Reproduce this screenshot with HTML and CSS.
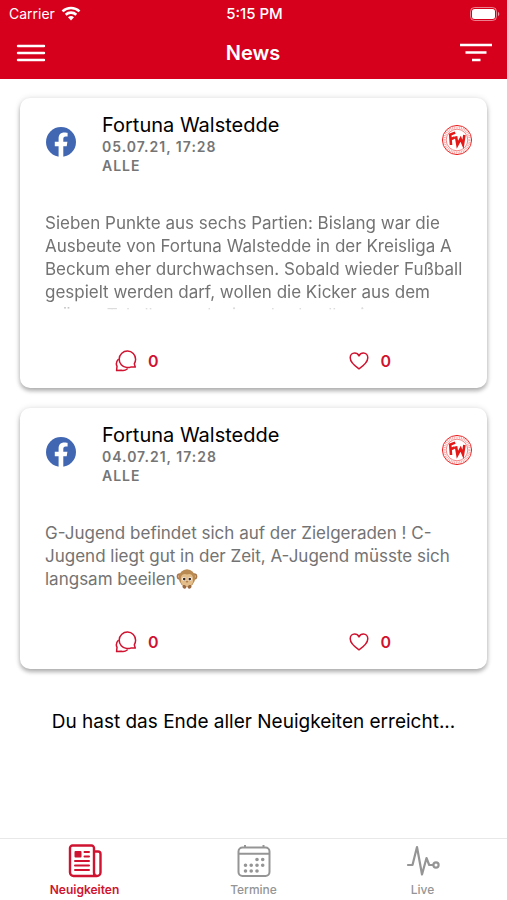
FILE: index.html
```html
<!DOCTYPE html>
<html lang="de">
<head>
<meta charset="UTF-8">
<meta name="viewport" content="width=device-width, initial-scale=1">
<title>News</title>
<link rel="stylesheet" href="styles.css">
</head>
<body>
<!-- shared icons -->
<svg class="sprite" aria-hidden="true">
	<symbol id="facebook" viewBox="0 0 30 30">
		<circle cx="15" cy="15" r="15" fill="#4267b2"/>
		<path d="M12.600 30V19.200H8.800v-4.400h3.800v-3.300c0-3.800 2.200-5.900 5.700-5.900 1.600 0 3.300.3 3.300.3v3.700h-1.900c-1.800 0-2.400 1.100-2.400 2.300v2.900h4.100l-.7 4.400h-3.400V30z" fill="#fff"/>
	</symbol>
	<symbol id="club" viewBox="0 0 32 32">
		<g fill="none" stroke="#ec2525">
			<circle cx="16" cy="16" r="14.600" stroke-width="1"/>
			<circle cx="16" cy="16" r="12.600" stroke-width="2.200" stroke-dasharray="1 .8" opacity=".4"/>
			<circle cx="16" cy="16" r="10.800" stroke-width=".8" opacity=".7"/>
			<path d="M10 21L9.200 10.600l5-2M9.800 15.200l4-1.800M15 12.200l1.400 8.600 3.200-6 2.400 5.600 1.400-9.400" stroke-width="2.600" stroke="#e51717"/>
		</g>
	</symbol>
	<symbol id="comment" viewBox="0 0 22 22">
		<g fill="none" stroke="currentColor" stroke-width="1.500" stroke-linejoin="round" stroke-linecap="round">
			<path d="M20.300 17.100h-4.600c-1.200.4-2.600.6-3.900.4A8.200 8.200 0 1 1 20.600 9.300c0 1.700-.5 3.200-1.300 4.500z"/>
			<path d="M3.200 9.600C1.200 11.700 1 14.200 2 16.200L1.600 20.600l4.600-.4c2.200.5 4.400.1 6-1.200"/>
		</g>
	</symbol>
	<symbol id="heart" viewBox="0 0 20 20">
		<path d="M10 17.800C5.500 14.700 1.200 11.200 1.200 6.700 1.200 3.900 3.200 2 5.600 2 7.500 2 9.100 3 10 4.900 10.900 3 12.500 2 14.400 2c2.400 0 4.400 1.900 4.400 4.700 0 4.500-4.300 8-8.800 11.100z" fill="none" stroke="currentColor" stroke-width="1.500" stroke-linejoin="round"/>
	</symbol>
</svg>
<div class="page">
	<header class="header">
		<div class="status">
			<span class="carrier">Carrier
				<svg width="20" height="15" viewBox="0 0 20 15" fill="none" stroke="#fff" stroke-width="2.600">
					<path d="M1.500 5.400a12.500 12.500 0 0 1 17 0M4.700 8.700a7.800 7.800 0 0 1 10.600 0"/>
					<path d="M7 11.300a4.400 4.400 0 0 1 6 0L10 14.400z" fill="#fff" stroke="none"/>
				</svg>
			</span>
			<span class="time">5:15 PM</span>
			<svg class="battery" width="30" height="14" viewBox="0 0 30 14">
				<rect x=".5" y=".5" width="26" height="13" rx="4" fill="none" stroke="#fff" opacity=".5"/>
				<rect x="2" y="2" width="23" height="10" rx="2.500" fill="#fff"/>
				<path d="M28 4.800c1.800.8 1.800 3.600 0 4.400z" fill="#fff" opacity=".6"/>
			</svg>
		</div>
		<div class="bar">
			<button class="bar-btn" type="button" aria-label="Menü">
				<svg width="30" height="20" viewBox="0 0 30 20" stroke="#fff" stroke-width="2.400" stroke-linecap="round"><path d="M2 3h26M2 10h26M2 17h26"/></svg>
			</button>
			<h1 class="title">News</h1>
			<button class="bar-btn" type="button" aria-label="Filter">
				<svg width="32" height="20" viewBox="0 0 32 20" stroke="#fff" stroke-width="2.400"><path d="M0 2h32M5.500 9.500h21M12 17h8.500"/></svg>
			</button>
		</div>
	</header>
	<main class="feed">
		<article class="card">
			<div class="card-head">
				<svg class="source" width="30" height="30"><use href="#facebook"/></svg>
				<div class="meta">
					<h2 class="name">Fortuna Walstedde</h2>
					<p class="sub">05.07.21, 17:28</p>
					<p class="sub">ALLE</p>
				</div>
				<svg class="club" width="32" height="32"><use href="#club"/></svg>
			</div>
			<p class="text long">Sieben Punkte aus sechs Partien: Bislang war die Ausbeute von Fortuna Walstedde in der Kreisliga A Beckum eher durchwachsen. Sobald wieder Fußball gespielt werden darf, wollen die Kicker aus dem grünen Tal allen noch einmal schnell zeigen</p>
			<div class="actions">
				<button class="action" type="button" aria-label="Kommentare"><svg width="22" height="22"><use href="#comment"/></svg>0</button>
				<button class="action" type="button" aria-label="Gefällt mir"><svg width="20" height="20"><use href="#heart"/></svg>0</button>
			</div>
		</article>
		<article class="card">
			<div class="card-head">
				<svg class="source" width="30" height="30"><use href="#facebook"/></svg>
				<div class="meta">
					<h2 class="name">Fortuna Walstedde</h2>
					<p class="sub">04.07.21, 17:28</p>
					<p class="sub">ALLE</p>
				</div>
				<svg class="club" width="32" height="32"><use href="#club"/></svg>
			</div>
			<p class="text">G-Jugend befindet sich auf der Zielgeraden ! C-<wbr>Jugend liegt gut in der Zeit, A-Jugend müsste sich langsam beeilen<svg class="emoji" width="22" height="20" viewBox="0 0 22 20" role="img" aria-label="Affe">
				<circle cx="4" cy="7.500" r="3.300" fill="#a9774a"/>
				<circle cx="18" cy="7.500" r="3.300" fill="#a9774a"/>
				<circle cx="3.800" cy="7.500" r="1.800" fill="#e5b08a"/>
				<circle cx="18.200" cy="7.500" r="1.800" fill="#e5b08a"/>
				<ellipse cx="11" cy="9" rx="8.200" ry="8.800" fill="#b98b52"/>
				<path d="M11 5.500C7 3.500 4.300 7 5 11c-.6 4 2.400 6.300 6 6.300s6.600-2.300 6-6.300C17.700 7 15 3.500 11 5.500z" fill="#e3be8a"/>
				<ellipse cx="8" cy="10" rx="1.800" ry="2" fill="#fff"/>
				<ellipse cx="14" cy="10" rx="1.800" ry="2" fill="#fff"/>
				<circle cx="8.200" cy="10.100" r="1.300" fill="#35251c"/>
				<circle cx="13.800" cy="10.100" r="1.300" fill="#35251c"/>
				<ellipse cx="11" cy="12.800" rx="1.300" ry=".7" fill="#a9774a"/>
				<path d="M6.500 16.500c1.500-1 3.300-.4 3.800 1 .2 1.700-.8 2.300-1.900 2.200-1.300-.2-2.100-1.500-1.900-3.200zM15.500 16.500c-1.500-1-3.300-.4-3.800 1-.2 1.700.8 2.300 1.900 2.200 1.300-.2 2.100-1.500 1.900-3.200z" fill="#9c6a40"/>
			</svg></p>
			<div class="actions">
				<button class="action" type="button" aria-label="Kommentare"><svg width="22" height="22"><use href="#comment"/></svg>0</button>
				<button class="action" type="button" aria-label="Gefällt mir"><svg width="20" height="20"><use href="#heart"/></svg>0</button>
			</div>
		</article>
		<p class="end">Du hast das Ende aller Neuigkeiten erreicht...</p>
	</main>
	<nav class="tabs">
		<a class="tab active" href="#">
			<svg width="34" height="34" viewBox="0 0 34 34" fill="none" stroke="currentColor" stroke-width="2.400" stroke-linecap="round" stroke-linejoin="round">
				<path d="M26 29V4a2.500 2.500 0 0 0-2.500-2.500h-19A2.500 2.500 0 0 0 2 4v24.500A3.500 3.500 0 0 0 5.500 32H29a3.500 3.500 0 0 0 3.500-3.500V10A2.500 2.500 0 0 0 30 7.500h-4M26 28.500q0 3.500 3 3.500"/>
				<path d="M16.500 8h4.500M16.500 12.500h4.500M7 17h14M7 21.500h14M7 26h14" stroke-width="2"/>
				<rect x="6.500" y="7" width="7" height="6.500" rx="1" fill="currentColor" stroke="none"/>
			</svg>
			Neuigkeiten
		</a>
		<a class="tab" href="#">
			<svg width="34" height="34" viewBox="0 0 34 34" fill="none" stroke="currentColor" stroke-width="2">
				<rect x="1.500" y="3.500" width="31" height="28.500" rx="4"/>
				<path d="M1.500 9.800h31M8 1v2.500M26.500 1v2.500"/>
				<path d="M20 15.500h.01M25.700 15.500h.01M8.500 21.200h.01M14.200 21.200h.01M20 21.200h.01M25.700 21.200h.01M8.500 27h.01M14.200 27h.01M20 27h.01" stroke-width="3.600" stroke-linecap="round"/>
			</svg>
			Termine
		</a>
		<a class="tab" href="#">
			<svg width="34" height="34" viewBox="0 0 34 34" fill="none" stroke="currentColor" stroke-width="2.200" stroke-linecap="round" stroke-linejoin="round">
				<path d="M2 21h4.500L11 3l5 27.500L20.500 14l2.700 7H27"/>
				<circle cx="30" cy="21" r="2.600"/>
			</svg>
			Live
		</a>
	</nav>
</div>
</body>
</html>
```
FILE: styles.css
```css
body {
	margin: 0;
	font-family: Inter, "Liberation Sans", sans-serif;
	background: #fff;
	color: #000;
}
h1, h2, p {
	margin: 0;
}
button {
	margin: 0;
	padding: 0;
	border: 0;
	background: none;
	font: inherit;
	color: inherit;
}
svg {
	display: block;
}
.sprite {
	position: absolute;
	width: 0;
	height: 0;
}
.page {
	display: flex;
	flex-direction: column;
	height: 100vh;
}
/* header */
.header {
	flex: none;
	background: #d6001c;
	color: #fff;
}
.status {
	display: grid;
	grid-template-columns: 1fr auto 1fr;
	align-items: center;
	height: 27px;
	padding: 0 7px 0 9px;
	font-size: 15px;
}
.carrier {
	display: flex;
	align-items: center;
	gap: 6px;
	font-size: 14px;
}
.time {
	font-weight: 500;
}
.battery {
	justify-self: end;
}
.bar {
	display: flex;
	align-items: center;
	justify-content: space-between;
	height: 52px;
	padding: 0 15px 0 16px;
}
.title {
	font-size: 20px;
	font-weight: 600;
}
/* cards */
.feed {
	flex: 1;
	min-height: 0;
	overflow: hidden;
	padding: 19px 20px 0;
}
.card {
	margin-bottom: 20px;
	padding: 15px 0 16px;
	border-radius: 10px;
	box-shadow: 0 3px 4px rgba(0, 0, 0, .28), 0 0 6px rgba(0, 0, 0, .12);
}
.card-head {
	display: flex;
	align-items: flex-start;
	height: 99px;
	padding: 0 14px 0 26px;
}
.source {
	margin: 14px 26px 0 0;
}
.meta {
	flex: 1;
}
.name {
	font-size: 20px;
	font-weight: 400;
	line-height: 24px;
}
.sub {
	font-size: 14px;
	font-weight: 600;
	line-height: 19px;
	letter-spacing: 1px;
	color: #757575;
}
.club {
	margin-top: 11px;
}
.text {
	margin: 0 22px 0 25px;
	max-height: 98px;
	overflow: hidden;
	font-size: 17px;
	line-height: 23px;
	color: #737373;
}
/* fades out the line that is cut */
.long {
	-webkit-mask-image: linear-gradient(#000 92px, transparent 98px);
	mask-image: linear-gradient(#000 92px, transparent 98px);
}
.emoji {
	display: inline-block;
	vertical-align: -4px;
}
.actions {
	display: grid;
	grid-template-columns: 1fr 1fr;
	margin-top: 39px;
}
.action {
	display: flex;
	align-items: center;
	justify-content: center;
	gap: 11px;
	height: 23px;
	font-size: 16px;
	font-weight: 600;
	color: #cf1330;
}
.end {
	padding-top: 21px;
	font-size: 19px;
	line-height: 24px;
	text-align: center;
}
/* bottom tabs */
.tabs {
	flex: none;
	display: grid;
	grid-template-columns: 1fr 1fr 1fr;
	height: 61px;
	border-top: 1px solid #e8e8e8;
	background: #fff;
}
.tab {
	display: flex;
	flex-direction: column;
	align-items: center;
	gap: 4px;
	padding-top: 5px;
	font-size: 12px;
	font-weight: 500;
	line-height: 16px;
	color: #959595;
	text-decoration: none;
}
.tab.active {
	font-weight: 600;
	color: #cf1330;
}
```
